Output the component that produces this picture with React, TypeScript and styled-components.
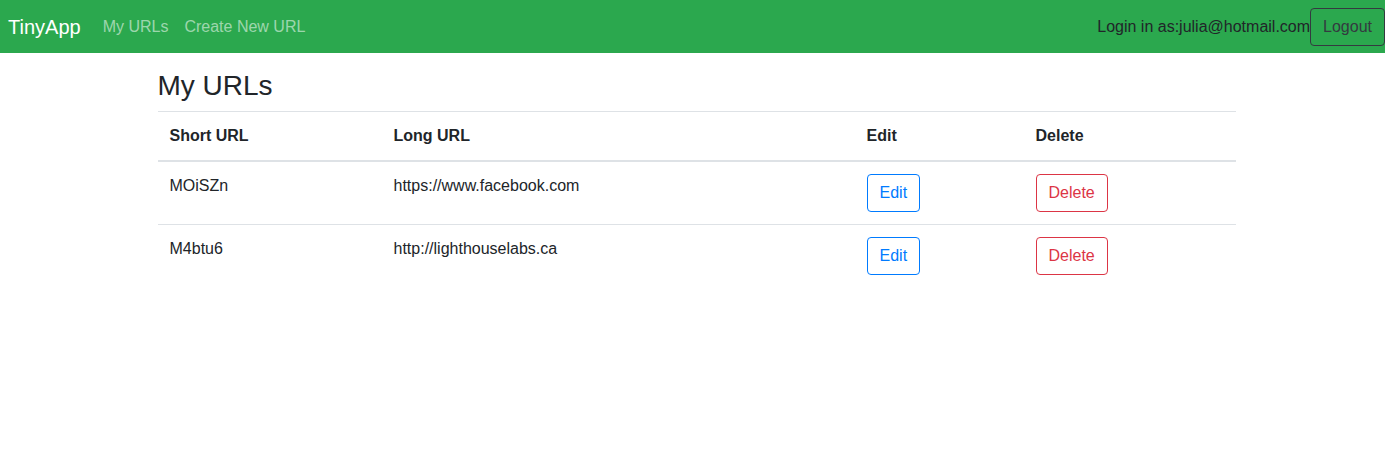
import React from "react";
import styled, { createGlobalStyle } from "styled-components";

const Global = createGlobalStyle`
  body {
    margin: 0;
    font-family: "Liberation Sans", Arial, sans-serif;
    font-size: 16px;
    line-height: 1.5;
    color: #212529;
    background: #fff;
  }
  * { box-sizing: border-box; }
`;

const Navbar = styled.nav`
  height: 53px;
  background: #2ba84e;
  display: flex;
  align-items: center;
  padding-left: 8px;
`;

const Brand = styled.a`
  font-size: 20px;
  color: #fff;
  margin-right: 22px;
  text-decoration: none;
`;

const NavLink = styled.a`
  color: rgba(255, 255, 255, 0.55);
  font-size: 16px;
  margin-right: 16px;
  text-decoration: none;
`;

const Right = styled.div`
  margin-left: auto;
  display: flex;
  align-items: center;
`;

const UserText = styled.span`
  color: #212529;
`;

const OutlineButton = styled.button<{ $tone: string }>`
  font-family: inherit;
  font-size: 16px;
  line-height: 24px;
  padding: 6px 12px;
  background: transparent;
  border: 1px solid ${(p) => p.$tone};
  color: ${(p) => p.$tone};
  border-radius: 4px;
  cursor: pointer;
`;

const Container = styled.main`
  width: 1078px;
  margin: 0 auto;
  padding-top: 16px;
  position: relative;
  left: 4px;
`;

const Title = styled.h3`
  font-size: 28px;
  font-weight: 500;
  line-height: 1.2;
  margin: 0 0 8px;
`;

const Table = styled.table`
  width: 100%;
  border-collapse: collapse;
`;

const Th = styled.th<{ $w?: number }>`
  text-align: left;
  font-weight: 700;
  padding: 12px;
  border-top: 1px solid #dee2e6;
  border-bottom: 2px solid #dee2e6;
  vertical-align: bottom;
  width: ${(p) => (p.$w ? `${p.$w}px` : "auto")};
`;

const Td = styled.td`
  padding: 12px;
  border-top: 1px solid #dee2e6;
  vertical-align: top;
`;

const rows = [
  { short: "MOiSZn", long: "https://www.facebook.com" },
  { short: "M4btu6", long: "http://lighthouselabs.ca" },
];

export default function App() {
  return (
    <>
      <Global />
      <Navbar>
        <Brand>TinyApp</Brand>
        <NavLink>My URLs</NavLink>
        <NavLink>Create New URL</NavLink>
        <Right>
          <UserText>Login in as:julia@hotmail.com</UserText>
          <OutlineButton $tone="#343a40">Logout</OutlineButton>
        </Right>
      </Navbar>
      <Container>
        <Title>My URLs</Title>
        <Table>
          <thead>
            <tr>
              <Th $w={224}>Short URL</Th>
              <Th $w={473}>Long URL</Th>
              <Th $w={169}>Edit</Th>
              <Th>Delete</Th>
            </tr>
          </thead>
          <tbody>
            {rows.map((r) => (
              <tr key={r.short}>
                <Td>{r.short}</Td>
                <Td>{r.long}</Td>
                <Td>
                  <OutlineButton $tone="#007bff">Edit</OutlineButton>
                </Td>
                <Td>
                  <OutlineButton $tone="#dc3545">Delete</OutlineButton>
                </Td>
              </tr>
            ))}
          </tbody>
        </Table>
      </Container>
    </>
  );
}
